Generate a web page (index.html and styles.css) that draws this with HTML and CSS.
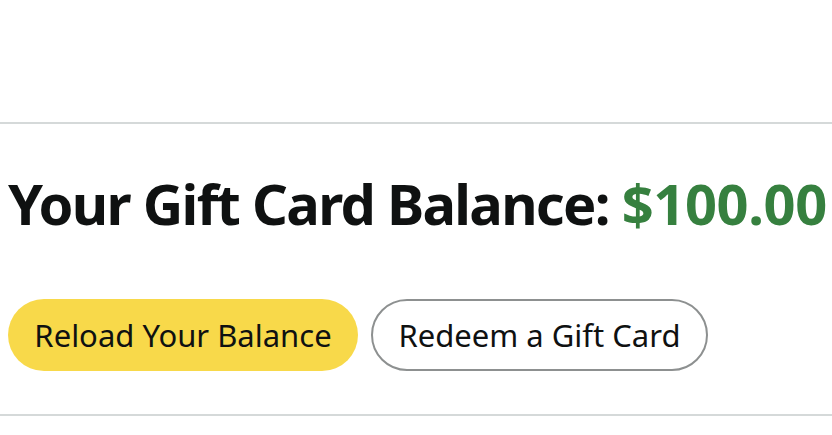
FILE: index.html
```html
<!DOCTYPE html>
<html lang="en">
<head>
<meta charset="utf-8">
<title>Gift Card Balance</title>
<link rel="stylesheet" href="styles.css">
</head>
<body>
  <div class="top"></div>
  <section class="balance">
    <h1 class="title">Your Gift Card Balance: <span class="amount">$100.00</span></h1>
    <div class="actions">
      <button class="btn btn-primary" type="button">Reload Your Balance</button>
      <button class="btn btn-secondary" type="button">Redeem a Gift Card</button>
    </div>
  </section>
</body>
</html>
```

FILE: styles.css
```css
html, body {
  margin: 0;
  padding: 0;
  background: #ffffff;
}

body {
  width: 832px;
  height: 435px;
  overflow: hidden;
  font-family: "Noto Sans", "Open Sans", "Liberation Sans", sans-serif;
  color: #0f1111;
}

.top {
  height: 122px;
  border-bottom: 2px solid #d5d9d9;
}

.balance {
  padding: 0 0 0 8px;
  border-bottom: 2px solid #d5d9d9;
  height: 292px;
  box-sizing: border-box;
  overflow: hidden;
}

.title {
  margin: 0;
  padding-top: 37px;
  font-size: 56px;
  font-weight: 700;
  line-height: 84px;
  white-space: nowrap;
  letter-spacing: -1.7px;
  word-spacing: 0;
}

.amount {
  color: #36803f;
  letter-spacing: -0.4px;
}

.actions {
  display: flex;
  gap: 13px;
  margin-top: 54px;
}

.btn {
  height: 72px;
  border-radius: 36px;
  font-family: inherit;
  font-size: 31px;
  font-weight: 400;
  color: #0f1111;
  padding: 0 20px;
  box-sizing: border-box;
  cursor: pointer;
  letter-spacing: 0;
}

.btn-primary {
  width: 350px;
  background: #f8d94a;
  border: none;
}

.btn-secondary {
  width: 337px;
  background: #ffffff;
  border: 2px solid #8d9090;
}
```
